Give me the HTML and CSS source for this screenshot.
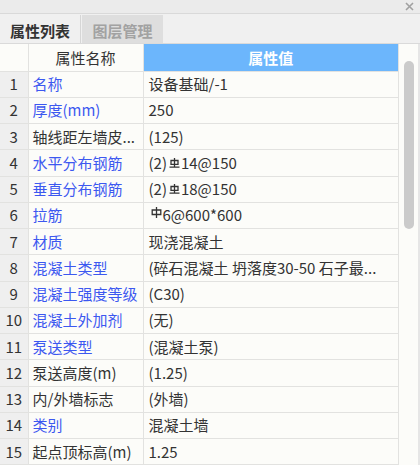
FILE: index.html
```html
<!DOCTYPE html>
<html lang="zh-CN">

<head>
  <meta charset="UTF-8">
  <title>属性列表</title>
  <link rel="stylesheet" href="styles.css">
</head>

<body>
  <div class="panel">
    <div class="titlebar">
      <svg class="close" width="9" height="9" viewBox="0 0 9 9">
        <path d="M1 1L8 8M8 1L1 8" stroke="#a0a0a0" stroke-width="1.6" />
      </svg>
    </div>
    <div class="tabs">
      <div class="tab active">属性列表</div>
      <div class="tab">图层管理</div>
    </div>
    <div class="body">
      <table class="props">
        <colgroup>
          <col class="col-num">
          <col class="col-name">
          <col class="col-value">
        </colgroup>
        <thead>
          <tr>
            <th class="num"></th>
            <th class="name-head">属性名称</th>
            <th class="value-head">属性值</th>
          </tr>
        </thead>
        <tbody>
          <tr><td class="num">1</td><td class="name link">名称</td><td>设备基础/-1</td></tr>
          <tr><td class="num">2</td><td class="name link">厚度(mm)</td><td>250</td></tr>
          <tr><td class="num">3</td><td class="name">轴线距左墙皮...</td><td>(125)</td></tr>
          <tr>
            <td class="num">4</td><td class="name link">水平分布钢筋</td>
            <td>(2)<svg class="bar3" width="11" height="10" viewBox="0 0 11 10"><path d="M5.5 0V9M2 2.5H9V6.3H2ZM0.5 9.2H10.5" /></svg>14@150</td>
          </tr>
          <tr>
            <td class="num">5</td><td class="name link">垂直分布钢筋</td>
            <td>(2)<svg class="bar3" width="11" height="10" viewBox="0 0 11 10"><path d="M5.5 0V9M2 2.5H9V6.3H2ZM0.5 9.2H10.5" /></svg>18@150</td>
          </tr>
          <tr>
            <td class="num">6</td><td class="name link">拉筋</td>
            <td><svg class="bar1" width="11" height="11" viewBox="0 0 11 11"><path d="M5.5 0V11M1.2 3H9.8V7.5H1.2Z" /></svg>6@600*600</td>
          </tr>
          <tr><td class="num">7</td><td class="name link">材质</td><td>现浇混凝土</td></tr>
          <tr><td class="num">8</td><td class="name link">混凝土类型</td><td>(碎石混凝土 坍落度30-50 石子最...</td></tr>
          <tr><td class="num">9</td><td class="name link">混凝土强度等级</td><td>(C30)</td></tr>
          <tr><td class="num">10</td><td class="name link">混凝土外加剂</td><td>(无)</td></tr>
          <tr><td class="num">11</td><td class="name link">泵送类型</td><td>(混凝土泵)</td></tr>
          <tr><td class="num">12</td><td class="name">泵送高度(m)</td><td>(1.25)</td></tr>
          <tr><td class="num">13</td><td class="name">内/外墙标志</td><td>(外墙)</td></tr>
          <tr><td class="num">14</td><td class="name link">类别</td><td>混凝土墙</td></tr>
          <tr><td class="num">15</td><td class="name">起点顶标高(m)</td><td>1.25</td></tr>
        </tbody>
      </table>
      <div class="scrollbar">
        <div class="thumb"></div>
      </div>
    </div>
  </div>
</body>

</html>
```

FILE: styles.css
```css
body {
  margin: 0;
  font-family: "Noto Sans CJK SC", "Noto Sans", sans-serif;
  font-size: 15px;
  color: #333;
}

.panel {
  width: 420px;
  height: 465px;
  overflow: hidden;
  background-color: #f0f0f0;
  display: flex;
  flex-direction: column;
}

.titlebar {
  height: 13px;
  background-color: #ebebeb;
  border-bottom: 1px solid #d9d9d9;
  display: flex;
  justify-content: flex-end;
  align-items: center;
  padding-right: 6px;
  flex-shrink: 0;
}

.tabs {
  height: 28px;
  margin-top: 1px;
  display: flex;
  gap: 1px;
  border-bottom: 1px solid #dadada;
  flex-shrink: 0;
}

.tab {
  width: 81px;
  display: flex;
  align-items: center;
  justify-content: center;
  padding-top: 2px;
  box-sizing: border-box;
  background-color: #dedede;
  color: #a2a2a2;
  font-weight: bold;
}

.tab.active {
  background-color: #f0f0f0;
  color: #333;
  border-right: 1px solid #d6d6d6;
}

.body {
  flex: 1;
  display: flex;
  background-color: #fcfcf9;
}

.props {
  width: 399px;
  table-layout: fixed;
  border-collapse: collapse;
  align-self: flex-start;
}

.col-num {
  width: 28px;
}

.col-name {
  width: 115px;
}

.props th,
.props td {
  border: 1px solid #e2e2e0;
  padding: 0 5px;
  white-space: nowrap;
  overflow: hidden;
  text-align: left;
  font-weight: normal;
  line-height: 20px;
}

.props th {
  height: 25.5px;
  padding-top: 1px;
  border-top: none;
}

.props td {
  height: 25.25px;
}

.props tr > :first-child {
  border-left: none;
}

.props .num {
  padding: 0;
  text-align: center;
  background-color: #efefef;
}

.props th.num {
  background-color: #fcfcf9;
}

.props .name-head {
  text-align: center;
}

.props .value-head {
  text-align: center;
  background-color: #6cb6fc;
  color: #fff;
  font-weight: bold;
}

.props .name {
  padding-left: 4px;
}

.link {
  color: #3c58f0;
}

.bar3,
.bar1 {
  fill: none;
  stroke: #333;
  stroke-width: 1.3;
  vertical-align: 1px;
  margin: 0 1px 0 2px;
}

.bar1 {
  vertical-align: 3px;
  margin: 0 1px 0 2px;
}

.scrollbar {
  flex: 1;
  border-right: 2px solid #e6e6e6;
  padding-top: 17px;
  display: flex;
  justify-content: center;
}

.thumb {
  width: 10px;
  height: 168px;
  border-radius: 5px;
  background-color: #cbcbcb;
}
```
